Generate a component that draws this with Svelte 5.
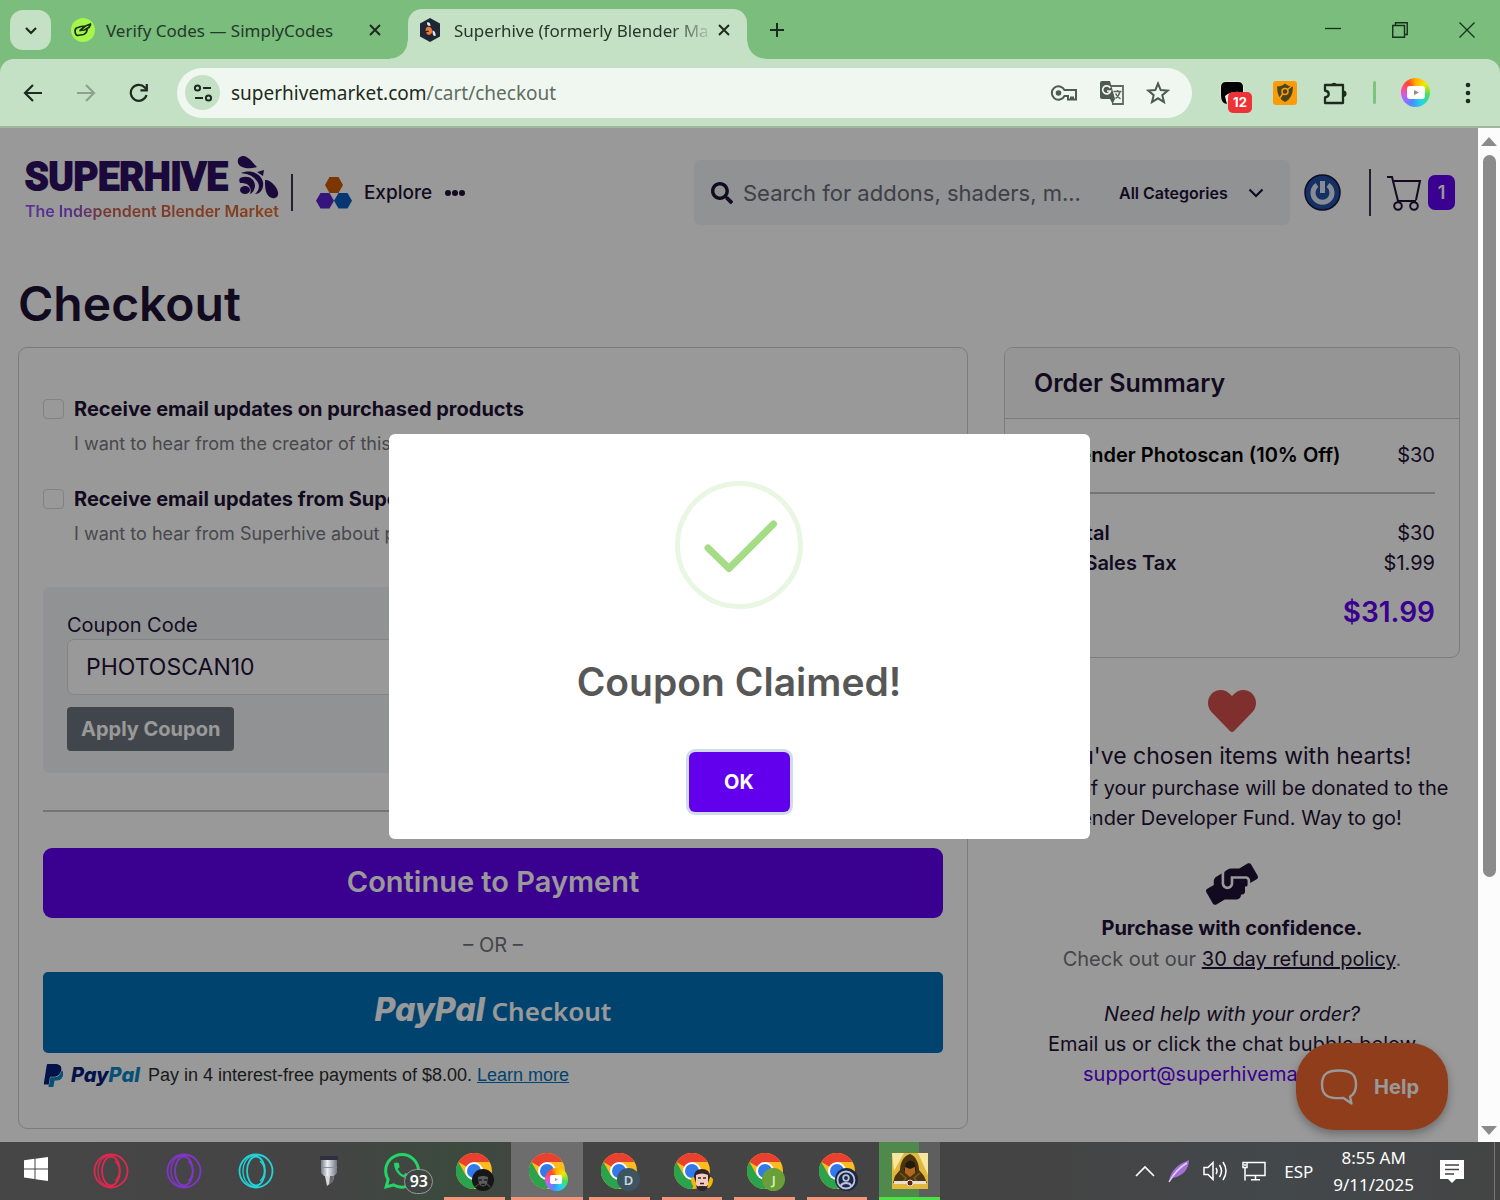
<script lang="ts">
  interface ChromeWindow {
    name: string
    badge: string
    letter?: string
    active?: boolean
  }

  const operaApps = [
    { name: 'Opera', color: '#e0284f' },
    { name: 'Opera GX', color: '#8136c9' },
    { name: 'Opera Air', color: '#22d3d8' }
  ]

  const chromeWindows: ChromeWindow[] = [
    { name: 'Chrome, first profile', badge: 'photo' },
    { name: 'Chrome, Superhive', badge: 'rainbow', active: true },
    { name: 'Chrome, profile D', badge: 'slate', letter: 'D' },
    { name: 'Chrome, fourth profile', badge: 'face' },
    { name: 'Chrome, profile J', badge: 'leaf', letter: 'J' },
    { name: 'Chrome, guest', badge: 'guest' }
  ]

  const subscriptions = [
    {
      id: 'updates-products',
      label: 'Receive email updates on purchased products',
      hint: 'I want to hear from the creator of this'
    },
    {
      id: 'updates-superhive',
      label: 'Receive email updates from Superhive',
      hint: 'I want to hear from Superhive about products'
    }
  ]

  let coupon = 'PHOTOSCAN10'
  let showModal = true
</script>

{#snippet closeIcon()}
  <svg width="14" height="14" viewBox="0 0 14 14"><path d="M2 2l10 10M12 2L2 12" stroke="#1c2b1e" stroke-width="2" /></svg>
{/snippet}

<div class="window">
  <div class="tabstrip">
    <button class="tab-search" aria-label="Search tabs">
      <svg width="14" height="10" viewBox="0 0 14 10"><path d="M2 2l5 5 5-5" fill="none" stroke="#1c2b1e" stroke-width="2.2" /></svg>
    </button>
    <div class="tab">
      <svg width="24" height="24" viewBox="0 0 24 24">
        <circle cx="12" cy="12" r="12" fill="#a6f54a" />
        <path d="M10 8.500L5.500 10c-2.500 1.500-1.500 7 1 7.500l6-1c2.500-1 3.500-3 3.500-5L19.500 7M9 12.500L14.500 8l5-2M10 8.500l4.500-.5M9 12.500l4.500-.5 5-3" fill="none" stroke="#17300f" stroke-width="1.700" stroke-linecap="round" stroke-linejoin="round" />
      </svg>
      <span class="tab-title">Verify Codes — SimplyCodes</span>
      <button class="icon-button" aria-label="Close tab">{@render closeIcon()}</button>
    </div>
    <div class="tab active">
      <svg width="22" height="24" viewBox="0 0 22 24">
        <path d="M11 0l10 5.500v13L11 24 1 18.500v-13z" fill="#1e2733" />
        <path d="M8 4.500c2-1 3.500 1 3.500 3.500-2 .5-4-1-3.500-3.500z" fill="#dfe6f2" />
        <path d="M7 10c2-2 5-1.500 6 1.500s-1 5-3 5.500c-2-.5-3-1.500-2.500-3 1.500 0 2.500 0 2.500-1-1-1-2-.5-3.500 0z" fill="#ee7a35" />
        <path d="M13.500 12.500c2 0 3.500 3 3 5.500-2 .5-3-1-3-5.500z" fill="#dfe6f2" />
      </svg>
      <span class="tab-title fade">Superhive (formerly Blender Ma</span>
      <button class="icon-button" aria-label="Close tab">{@render closeIcon()}</button>
    </div>
    <button class="icon-button new-tab" aria-label="New tab">
      <svg width="16" height="16" viewBox="0 0 16 16"><path d="M8 1v14M1 8h14" stroke="#1c2b1e" stroke-width="2" /></svg>
    </button>
    <div class="window-buttons">
      <button class="icon-button" aria-label="Minimize">
        <svg width="16" height="16" viewBox="0 0 16 16"><path d="M0 6.500h16" stroke="#17301a" stroke-width="1.300" /></svg>
      </button>
      <button class="icon-button" aria-label="Restore">
        <svg width="16" height="16" viewBox="0 0 16 16"><path d="M.75 3.500h11.750v11.750H.75zM3.500 3.500V.75h11.750V12.500H12.500" fill="none" stroke="#17301a" stroke-width="1.400" /></svg>
      </button>
      <button class="icon-button" aria-label="Close">
        <svg width="16" height="16" viewBox="0 0 16 16"><path d="M.5.5l15 15M15.500.5l-15 15" stroke="#17301a" stroke-width="1.300" /></svg>
      </button>
    </div>
  </div>

  <div class="toolbar">
    <div class="nav">
      <button class="icon-button" aria-label="Back">
        <svg width="20" height="20" viewBox="0 0 20 20"><path d="M19 10H2M10 2l-8 8 8 8" fill="none" stroke="#1c2b1e" stroke-width="2.200" /></svg>
      </button>
      <button class="icon-button" aria-label="Forward">
        <svg width="20" height="20" viewBox="0 0 20 20"><path d="M1 10h17M10 2l8 8-8 8" fill="none" stroke="#8aa48b" stroke-width="2.200" /></svg>
      </button>
      <button class="icon-button" aria-label="Reload">
        <svg width="20" height="20" viewBox="0 0 20 20"><path d="M17.500 12A8 8 0 1 1 15.800 4.500L18 7" fill="none" stroke="#1c2b1e" stroke-width="2.200" /><path d="M18.900 1v7.500h-7.500v-2.200h5.300V1z" fill="#1c2b1e" /></svg>
      </button>
    </div>
    <div class="omnibox">
      <button class="site-info" aria-label="View site information">
        <svg width="20" height="18" viewBox="0 0 20 18"><g fill="none" stroke="#1c2b1e" stroke-width="2"><circle cx="4.500" cy="4" r="2.600" /><path d="M10 4h8M2 14h8" /><circle cx="15.500" cy="14" r="2.600" /></g></svg>
      </button>
      <span class="url">superhivemarket.com<span class="path">/cart/checkout</span></span>
      <button class="icon-button" aria-label="Passwords">
        <svg width="28" height="18" viewBox="0 0 28 18"><path d="M14.500 6A6.700 6.700 0 1 0 14.500 12H18v3.500h3V13.500h2V15.500h3V6z" fill="none" stroke="#4f5b52" stroke-width="2" /><circle cx="8.500" cy="9" r="2.800" fill="#4f5b52" /></svg>
      </button>
      <button class="icon-button" aria-label="Translate">
        <svg width="26" height="26" viewBox="0 0 26 26">
          <path d="M9 6h15v18H13" fill="none" stroke="#5d6a60" stroke-width="1.800" />
          <path d="M1 3q0-2 2-2h8l5 18H3q-2 0-2-2z" fill="#4f5b52" />
          <path d="M11 19l2.500 5 2.500-5z" fill="#4f5b52" />
          <path d="M11.200 8A4 4 0 1 0 11.500 11H8" fill="none" stroke="#f0f7f0" stroke-width="1.700" />
          <path d="M14.500 11.500h8M18.500 10v1.500M21 11.500c-1 4-3 6-4.500 7M16.500 13.500c1 2 3 4 5 5.500" fill="none" stroke="#5d6a60" stroke-width="1.500" />
        </svg>
      </button>
      <button class="icon-button" aria-label="Bookmark this tab">
        <svg width="24" height="24" viewBox="0 0 24 24"><path d="M12 2.500l2.700 6.600 7 .5-5.400 4.600 1.700 6.900L12 17.300l-6 3.800 1.700-6.900L2.300 9.600l7-.5z" fill="none" stroke="#4f5b52" stroke-width="2" /></svg>
      </button>
    </div>
    <div class="extensions">
      <button class="icon-button ext-mask" aria-label="Extension, 12 notifications">
        <svg width="24" height="24" viewBox="0 0 24 24"><rect x=".5" y=".5" width="23" height="20" rx="5" fill="#e9f3e9" /><path d="M1 6q0-5 5-5h12q5 0 5 5v7q-3-3-8-2-7 1-10 4 1 5 2 8-6-1-6-8z" fill="#000" /></svg>
        <span class="ext-count">12</span>
      </button>
      <button class="icon-button" aria-label="Shield extension">
        <svg width="24" height="24" viewBox="0 0 24 24"><rect width="24" height="24" rx="3" fill="#fb9c07" /><path d="M4 5.500q5 0 8-3 3 3 8 3 0 12-8 15.500Q4 17.500 4 5.500z" fill="#4b4420" /><circle cx="12" cy="10.500" r="3" fill="none" stroke="#fb9c07" stroke-width="1.500" /><path d="M14.500 8.500L20 4M9.500 13L7 17" stroke="#fb9c07" stroke-width="1.500" /></svg>
      </button>
      <button class="icon-button" aria-label="Extensions">
        <svg width="26" height="26" viewBox="0 0 26 26"><path d="M3 5h18v18H3v-5.500c5-1 5-6 0-7z" fill="none" stroke="#1c2b1e" stroke-width="2.300" stroke-linejoin="round" /><path d="M9 5a3.200 3.500 0 0 1 6 0zM21 10.500a3.500 3.200 0 0 1 0 6.500z" fill="#1c2b1e" /></svg>
      </button>
      <span class="divider"></span>
      <button class="profile" aria-label="Profile">
        <svg width="18" height="13" viewBox="0 0 18 13"><rect width="18" height="13" rx="3" fill="#fff" /><path d="M7 4l5 2.500L7 9z" fill="#9a8c7a" /></svg>
      </button>
      <button class="icon-button" aria-label="Menu">
        <svg width="6" height="22" viewBox="0 0 6 22" fill="#1c2b1e"><circle cx="3" cy="3" r="2.300" /><circle cx="3" cy="11" r="2.300" /><circle cx="3" cy="19" r="2.300" /></svg>
      </button>
    </div>
  </div>

  <div class="viewport">
    <div class="page">
      <header>
        <a class="logo" href="/">
          <span class="logo-row">
            <span class="logo-name">SUPERHIVE</span>
            <svg width="42" height="44" viewBox="0 0 42 44" fill="#2c1061">
              <path d="M1 8C0 3 3 1 7 1c5 1 9 7 13 11-6 2-17 2-19-4z" />
              <path d="M20 17l7-2-1 6z" />
              <path d="M4 18c9-4 20 0 22 9 1 6-2 12-8 12 5-4 5-10 1-14-4-5-9-6-15-7z" />
              <path d="M3 23c8-3 14 0 15 7 0 4-2 8-5 9 1-3 1-6-1-8-2-3-6-3-9-3-1-2-1-4 0-5z" />
              <ellipse cx="8" cy="35" rx="5" ry="4" />
              <path d="M28 25c4-1 12 6 13 12 1 5-3 7-6 6-7-2-7-11-7-18z" />
            </svg>
          </span>
          <span class="tagline">The Independent Blender Market</span>
        </a>
        <span class="bar"></span>
        <button class="explore">
          <svg width="36" height="32" viewBox="0 0 36 32">
            <path d="M13.500 0h9l4.500 8-4.500 8h-9L9 8z" fill="#cf5a05" />
            <path d="M4.500 16h9l4.500 7.800-4.500 7.800h-9L0 23.800z" fill="#5624cd" />
            <path d="M22.500 16h9l4.500 7.800-4.500 7.800h-9L18 23.800z" fill="#0b5cc0" />
          </svg>
          Explore
          <svg width="22" height="8" viewBox="0 0 22 8" fill="#1f1235"><circle cx="4" cy="4" r="3" /><circle cx="11" cy="4" r="3" /><circle cx="18" cy="4" r="3" /></svg>
        </button>
        <form class="search">
          <svg width="22" height="22" viewBox="0 0 512 512" fill="#1f1235"><path d="M505 442.700L405.300 343c-4.500-4.500-10.600-7-17-7H372c27.600-35.300 44-79.700 44-128C416 93.100 322.900 0 208 0S0 93.100 0 208s93.100 208 208 208c48.300 0 92.700-16.400 128-44v16.300c0 6.400 2.500 12.500 7 17l99.700 99.700c9.400 9.400 24.600 9.400 33.900 0l28.300-28.300c9.400-9.400 9.400-24.600.1-34zM208 336c-70.700 0-128-57.200-128-128 0-70.700 57.200-128 128-128 70.700 0 128 57.200 128 128 0 70.700-57.200 128-128 128z" /></svg>
          <input type="text" aria-label="Search" placeholder="Search for addons, shaders, m..." />
          <select aria-label="Category">
            <option>All Categories</option>
          </select>
          <svg class="select-arrow" width="16" height="10" viewBox="0 0 16 10"><path d="M1.500 1.500L8 8l6.500-6.500" fill="none" stroke="#1f1235" stroke-width="2.200" /></svg>
        </form>
        <button class="avatar" aria-label="Account">
          <svg width="37" height="37" viewBox="0 0 37 37"><circle cx="18.500" cy="18.500" r="17.500" fill="#2450a4" stroke="#1a1440" stroke-width="1.500" /><path d="M13 11a9.500 9.500 0 1 0 11 0" fill="none" stroke="#dfe9f8" stroke-width="5" /><path d="M18.500 7v12" stroke="#dfe9f8" stroke-width="5" /></svg>
        </button>
        <span class="bar tall"></span>
        <a class="cart" href="/cart" aria-label="Cart, 1 item">
          <svg width="36" height="36" viewBox="0 0 36 36" fill="none" stroke="#1f1235" stroke-width="2"><path d="M1 2h5l6 24h18M8 6h26l-4 19" /><circle cx="12" cy="31" r="3.800" /><circle cx="28" cy="31" r="3.800" /></svg>
          <span class="cart-count">1</span>
        </a>
      </header>

      <h1>Checkout</h1>

      <div class="columns">
        <section class="card checkout">
          {#each subscriptions as item}
            <div class="option">
              <input type="checkbox" id={item.id} />
              <label for={item.id}>{item.label}</label>
              <p>{item.hint}</p>
            </div>
          {/each}

          <div class="coupon">
            <label for="coupon">Coupon Code</label>
            <input id="coupon" type="text" bind:value={coupon} />
            <button>Apply Coupon</button>
          </div>

          <hr />
          <button class="continue">Continue to Payment</button>
          <div class="or">– OR –</div>
          <button class="paypal"><span class="paypal-word">PayPal</span> Checkout</button>
          <div class="pay-later">
            <svg width="20" height="25" viewBox="1 0 21 24"><path d="M21.222 6.917a3.350 3.350 0 0 0-.607-.541c-.013.076-.026.175-.041.254-.93 4.778-4.005 7.201-9.138 7.201h-2.190a.563.563 0 0 0-.556.479l-1.187 7.527h-.506l-.24 1.516a.56.56 0 0 0 .554.647h3.882c.46 0 .85-.334.922-.788.06-.26.76-4.852.816-5.090a.932.932 0 0 1 .923-.788h.58c3.760 0 6.705-1.528 7.565-5.946.36-1.847.174-3.388-.777-4.471z" fill="#0a86c4" /><path d="M7.076 21.337H2.470a.641.641 0 0 1-.633-.74L4.944.901C5.026.382 5.474 0 5.998 0h7.460c2.570 0 4.578.543 5.690 1.810 1.010 1.150 1.304 2.420 1.012 4.287-.023.143-.047.288-.077.437-.983 5.050-4.349 6.797-8.647 6.797h-2.190c-.524 0-.968.382-1.050.9l-1.120 7.106z" fill="#04207c" /></svg>
            <span class="paypal-word small">Pay<span>Pal</span></span>
            <span>Pay in 4 interest-free payments of $8.00. <a href="/pay-later">Learn more</a></span>
          </div>
        </section>

        <aside>
          <section class="card summary">
            <h2>Order Summary</h2>
            <dl>
              <div class="product"><dt>1 × Blender Photoscan (10% Off)</dt><dd>$30</dd></div>
              <div><dt>Subtotal</dt><dd>$30</dd></div>
              <div><dt>State Sales Tax</dt><dd>$1.99</dd></div>
              <div class="total"><dt>Total</dt><dd>$31.99</dd></div>
            </dl>
          </section>

          <div class="notes">
            <svg width="48" height="42" viewBox="0 32 512 448" fill="#d64f4f"><path d="M462.300 62.600C407.500 15.900 326 24.300 275.700 76.200L256 96.500l-19.700-20.300C186.100 24.300 104.500 15.900 49.700 62.600c-62.800 53.600-66.100 149.800-9.900 207.900l193.500 199.800c12.500 12.900 32.800 12.900 45.300 0l193.500-199.800c56.300-58.100 53-154.300-9.800-207.900z" /></svg>
            <p class="lead">You've chosen items with hearts!</p>
            <p>A part of your purchase will be donated to the Blender Developer Fund. Way to go!</p>
            <svg class="hands" width="52" height="42" viewBox="0 0 640 512" fill="#1f1235"><path d="M488 192H336v56c0 39.700-32.300 72-72 72s-72-32.300-72-72V126.400l-64.900 39C107.800 176.900 96 197.800 96 220.200v47.300l-80 46.200C.7 322.500-4.600 342.100 4.300 357.400l80 138.600c8.800 15.300 28.400 20.500 43.700 11.700L231.400 448H368c35.300 0 64-28.700 64-64h16c17.700 0 32-14.300 32-32v-64h8c13.300 0 24-10.700 24-24v-48c0-13.300-10.700-24-24-24zm147.700-37.400L555.700 16C546.900.7 527.300-4.500 512 4.300L408.600 64H306.400c-12 0-23.700 3.400-33.900 9.700L239 94.600c-9.400 5.800-15 16.100-15 27.100V248c0 22.100 17.900 40 40 40s40-17.900 40-40v-88h184c30.900 0 56 25.100 56 56v28.500l80-46.200c15.300-8.900 20.500-28.400 11.700-43.700z" /></svg>
            <p><strong>Purchase with confidence.</strong></p>
            <p class="muted">Check out our <a href="/refunds">30 day refund policy</a>.</p>
            <p class="help-line"><em>Need help with your order?</em></p>
            <p>Email us or click the chat bubble below</p>
            <p><a class="mail" href="mailto:support@superhivemarket.com">support@superhivemarket.com</a></p>
          </div>
        </aside>
      </div>

      <button class="help">
        <svg width="40" height="40" viewBox="0 0 40 40"><path d="M20 3.500c11 0 17 3 17 14 0 6-2 10-6 12l1.500 7-8-5.500c-15 1-21.500-2-21.500-13.500C3 6.500 9 3.500 20 3.500z" fill="none" stroke="#fff" stroke-width="2.400" stroke-linejoin="round" /></svg>
        Help
      </button>

      {#if showModal}
        <div class="overlay">
          <div class="modal" role="dialog" aria-labelledby="modal-title">
            <svg width="128" height="128" viewBox="0 0 128 128">
              <circle cx="64" cy="64" r="61.500" fill="none" stroke="#e9f6e2" stroke-width="5" />
              <path d="M33 67l21 20.500L98.500 43" fill="none" stroke="#a5dc86" stroke-width="7" stroke-linecap="round" stroke-linejoin="round" />
            </svg>
            <h2 id="modal-title">Coupon Claimed!</h2>
            <button onclick={() => (showModal = false)}>OK</button>
          </div>
        </div>
      {/if}
    </div>
    <div class="scrollbar">
      <svg width="16" height="9" viewBox="0 0 16 9"><path d="M0 9l8-9 8 9z" fill="#8b8b8b" /></svg>
      <div class="track"><div class="thumb"></div></div>
      <svg width="16" height="9" viewBox="0 0 16 9"><path d="M0 0l8 9 8-9z" fill="#8b8b8b" /></svg>
    </div>
  </div>

  <footer class="taskbar">
    <button class="start" aria-label="Start">
      <svg width="26" height="26" viewBox="0 0 26 26" fill="#fff"><path d="M1 4.300l10.500-1.500v9.600H1zM12.500 2.700L25 1v11.400H12.500zM1 13.500h10.500v9.600L1 21.600zM12.500 13.500H25V25l-12.500-1.800z" /></svg>
    </button>
    <div class="apps">
      {#each operaApps as app}
        <button aria-label={app.name}>
          <svg width="36" height="36" viewBox="0 0 36 36" fill="none" stroke={app.color} stroke-width="1.800"><circle cx="18" cy="18" r="16.500" /><ellipse cx="18" cy="18" rx="9" ry="14.500" /><path d="M22 8c6 5 6 15 0 20" stroke-width="1.500" /><path d="M20 2.500C0 0 0 36 20 33.500" stroke-width="1.300" /></svg>
        </button>
      {/each}
      <button aria-label="Pen tool">
        <svg width="24" height="36" viewBox="0 0 24 36">
          <defs><linearGradient id="metal"><stop offset="0" stop-color="#737986" /><stop offset=".4" stop-color="#eef0f5" /><stop offset="1" stop-color="#707684" /></linearGradient></defs>
          <path d="M3 3h18v4H3z" fill="#2e3040" /><path d="M4 7h16v13l-3 3H7l-3-3z" fill="url(#metal)" /><path d="M4 14h16v1H4z" fill="#8b909c" /><path d="M8 23h9l-1 5-6 5z" fill="#d9d9d9" /><path d="M13 23h4l-1 5-4 4z" fill="#6a6a6a" />
        </svg>
      </button>
      <button class="whatsapp" aria-label="WhatsApp, 93 unread">
        <svg width="36" height="36" viewBox="0 32 448 448" fill="#25d366"><path d="M380.900 97.100C339 55.100 283.200 32 223.900 32c-122.400 0-222 99.600-222 222 0 39.100 10.200 77.300 29.600 111L0 480l117.700-30.900c32.400 17.700 68.900 27 106.100 27h.1c122.300 0 224.100-99.600 224.100-222 0-59.300-25.200-115-67.100-157zm-157 341.600c-33.200 0-65.700-8.900-94-25.700l-6.700-4-69.800 18.300L72 359.200l-4.400-7c-18.500-29.400-28.200-63.300-28.200-98.200 0-101.700 82.800-184.500 184.600-184.500 49.300 0 95.600 19.200 130.400 54.100 34.800 34.900 56.200 81.200 56.100 130.500 0 101.800-84.900 184.600-186.600 184.600z" /><path transform="translate(92 120) scale(11)" d="M20 15.400c-1.200 0-2.400-.2-3.500-.6-.4-.1-.7 0-1 .2l-1.600 2c-2.800-1.300-5.500-3.900-6.900-6.800l2-1.700c.2-.3.3-.7.2-1-.4-1.100-.6-2.300-.6-3.500 0-.5-.4-1-1-1H4.200C3.600 3 3 3.200 3 4c0 9.300 7.700 17 17 17 .7 0 1-.6 1-1.200v-3.400c0-.6-.4-1-1-1z" /></svg>
        <span class="unread">93</span>
      </button>
      {#each chromeWindows as win}
        <button class="running" class:current={win.active} aria-label={win.name}>
          <svg width="36" height="36" viewBox="0 0 36 36">
            <circle cx="18" cy="18" r="18" fill="#fbbc1f" />
            <path d="M18 18L2.400 9A18 18 0 0 1 33.600 9H18z" fill="#e8412f" />
            <path d="M2.400 9A18 18 0 0 0 18 36l8-13.500L18 27l-8-4.500z" fill="#2ba24c" />
            <circle cx="18" cy="18" r="9" fill="#fff" />
            <circle cx="18" cy="18" r="7" fill="#3279ea" />
          </svg>
          <span class="badge {win.badge}">
            {#if win.letter}
              {win.letter}
            {:else if win.badge === 'rainbow'}
              <svg width="12" height="9" viewBox="0 0 12 9"><rect width="12" height="9" rx="2" fill="#fff" /><path d="M5 3l3 1.500L5 6z" fill="#999" /></svg>
            {:else if win.badge === 'guest'}
              <svg width="20" height="20" viewBox="0 0 20 20" fill="none" stroke="#b9c3e0" stroke-width="1.800"><circle cx="10" cy="10" r="8.500" /><circle cx="10" cy="8" r="2.800" /><path d="M4.500 16c2-4 9-4 11 0" /></svg>
            {:else if win.badge === 'face'}
              <svg width="24" height="24" viewBox="0 0 24 24"><path d="M1 11q0 6 4 9h14q4-3 4-9l-2-2H3z" fill="#f2b705" /><path d="M4 9q0-8 8-8t8 8l-2 6H6z" fill="#30242a" /><path d="M6 7q6-3 12 0v9q-1 6-6 6t-6-6z" fill="#f0cdc0" /><path d="M6 17q2 2 3.500 1h5q1.500 1 3.500-1-1 6-6 6t-6-6z" fill="#30242a" /><path d="M8 10h3M13 10h3M10 15.500h4" stroke="#3a2228" stroke-width="1.300" /></svg>
            {:else}
              <svg width="22" height="22" viewBox="0 0 22 22"><circle cx="11" cy="11" r="11" fill="#161616" /><path d="M6 8q5-2 10 0l-1 7q-4 5-8 0z" fill="#5c5c5c" /><path d="M7 11h3M12 11h3M9 15.500h4" stroke="#1c1c1c" stroke-width="1.500" /><path d="M3 18l4-3M18 18l-3-3" stroke="#444" stroke-width="1.500" /></svg>
            {/if}
          </span>
        </button>
      {/each}
      <button class="game" aria-label="Game download">
        <svg width="36" height="36" viewBox="0 0 36 36">
          <rect width="36" height="36" fill="#e2b73d" />
          <path d="M0 0h12L2 18zM26 0h10v22z" fill="#f6e6a0" />
          <path d="M18 1C11 3 8 11 8 17l-5 6-2 7h34l-3-7-5-6C27 11 24 3 18 1z" fill="#4b3511" />
          <path d="M14 10q4-5 9 0l1 7-6 6-6-6z" fill="#241a0b" />
          <path d="M13 14l5 2 5-2v6l-5 4-5-4z" fill="#b4671c" />
          <path d="M8 20l6 5-3 4M28 20l-6 5 3 4" stroke="#7a5a20" stroke-width="1.500" fill="none" />
          <path d="M2 28h14v3H2zM20 28h14v3H20z" fill="#e8dfcf" /><circle cx="18" cy="30" r="3" fill="#5d1f16" stroke="#e8dfcf" />
        </svg>
      </button>
    </div>
    <div class="tray">
      <svg width="20" height="12" viewBox="0 0 20 12"><path d="M1 11l9-9 9 9" fill="none" stroke="#fff" stroke-width="1.600" /></svg>
      <svg width="22" height="24" viewBox="0 0 22 24"><path d="M1 23C2 12 10 5 21 1c0 9-6 16-16 18z" fill="#a46fd6" /><path d="M1 23C6 14 12 8 19 4" stroke="#e3cdf7" stroke-width="1.500" fill="none" /></svg>
      <svg width="26" height="22" viewBox="0 0 26 22" fill="none" stroke="#fff" stroke-width="1.500"><path d="M1 7.500h4l5-5v17l-5-5H1zM13 8q2 3 0 6M16.500 5q4 6 0 12M20 2q6 9 0 18" /></svg>
      <svg width="24" height="20" viewBox="0 0 24 20" fill="none" stroke="#fff" stroke-width="1.500"><path d="M5 1.500h18v13H4M13.500 14.500v4M9 18.800h9M1 1.500h4v5H1zM3 6.500v13M3 3v2" /></svg>
      <span class="lang">ESP</span>
      <div class="clock"><span>8:55 AM</span><span>9/11/2025</span></div>
      <svg width="24" height="24" viewBox="0 0 24 24"><path d="M0 1h24v19h-8l-4 4-4-4H0z" fill="#fff" /><path d="M5 6h14M5 10.500h14M5 15h9" stroke="#444" stroke-width="1.500" /></svg>
    </div>
  </footer>
</div>

<style>
  :global(body) {
    margin: 0;
  }

  * {
    box-sizing: border-box;
  }

  .window {
    display: flex;
    flex-direction: column;
    height: 100vh;
    font-family: Inter, sans-serif;
    color: #1f1235;
    background: #7bbd7d;
  }

  button,
  input,
  select {
    font: inherit;
    color: inherit;
  }

  button {
    border: 0;
    padding: 0;
    background: none;
    cursor: pointer;
  }

  svg {
    flex: none;
  }

  .icon-button {
    display: grid;
    place-items: center;
    flex: none;
  }

  /* browser frame */
  .tabstrip {
    display: flex;
    align-items: center;
    height: 59px;
    padding-left: 10px;
    font-family: "Noto Sans", sans-serif;
    font-size: 17px;
    color: #25382a;
  }

  .tab-search {
    width: 41px;
    height: 40px;
    border-radius: 13px;
    background: #c5e1c5;
  }

  .tab {
    position: relative;
    display: flex;
    align-items: center;
    width: 339px;
    height: 50px;
    margin-top: 9px;
    padding: 0 8px 8px 20px;
    gap: 11px;
  }

  .tab.active {
    padding-left: 11px;
    padding-right: 16px;
    gap: 13px;
    margin-left: 18px;
    border-radius: 14px 14px 0 0;
    background: #c5e1c5;
  }

  .tab.active::before,
  .tab.active::after {
    content: "";
    position: absolute;
    bottom: 0;
    width: 18px;
    height: 18px;
  }

  .tab.active::before {
    left: -18px;
    background: radial-gradient(circle at 0 0, transparent 17px, #c5e1c5 18px);
  }

  .tab.active::after {
    right: -18px;
    background: radial-gradient(circle at 100% 0, transparent 17px, #c5e1c5 18px);
  }

  .tab-title {
    flex: 1;
    white-space: nowrap;
  }

  .tab-title.fade {
    margin-right: -10px;
    mask-image: linear-gradient(to right, #000 84%, transparent);
  }

  .new-tab {
    margin-left: 22px;
  }

  .window-buttons {
    display: flex;
    gap: 51px;
    margin-left: auto;
    margin-right: 25px;
  }

  .toolbar {
    display: flex;
    align-items: center;
    gap: 28px;
    height: 69px;
    padding: 0 29px 0 23px;
    border-radius: 14px 14px 0 0;
    border-bottom: 2px solid #a0b8a0;
    background: #c5e1c5;
  }

  .nav {
    display: flex;
    gap: 33px;
  }

  .omnibox {
    display: flex;
    flex: 1;
    align-items: center;
    gap: 21px;
    height: 50px;
    padding: 0 22px 0 8px;
    border-radius: 25px;
    background: #f0f7f0;
  }

  .site-info {
    display: grid;
    place-items: center;
    width: 35px;
    height: 35px;
    border-radius: 50%;
    background: #c5e1c5;
  }

  .url {
    flex: 1;
    margin-left: -10px;
    font-family: "Noto Sans", sans-serif;
    font-size: 19px;
    color: #1d2b20;
  }

  .path {
    color: #5f6d62;
  }

  .extensions {
    display: flex;
    align-items: center;
    gap: 25px;
  }

  .ext-mask {
    position: relative;
    margin-right: 4px;
  }

  .ext-count {
    position: absolute;
    left: 8px;
    top: 11px;
    width: 24px;
    height: 21px;
    border-radius: 5px;
    background: #ee3338;
    color: #fff;
    font-size: 13px;
    font-weight: 700;
    line-height: 21px;
    text-align: center;
  }

  .divider {
    width: 3px;
    height: 23px;
    border-radius: 2px;
    background: #7bc47e;
  }

  .profile {
    display: grid;
    place-items: center;
    width: 29px;
    height: 29px;
    margin-right: 10px;
    border-radius: 50%;
    background: conic-gradient(#ffb000, #f4e800 50deg, #45e060 100deg, #22d4e8 150deg, #4a8cff 200deg, #c45cff 250deg, #ff4a90 285deg, #ff4a20 325deg, #ffb000);
  }

  /* page */
  .viewport {
    display: flex;
    flex: 1;
    min-height: 0;
  }

  .page {
    position: relative;
    flex: 1;
    overflow: hidden;
    padding: 32px 18px 12px;
    background: #fff;
    font-size: 20px;
    line-height: 30px;
  }

  header {
    display: flex;
    align-items: center;
    height: 65px;
    padding: 0 5px 0 7px;
  }

  .logo {
    display: flex;
    flex-direction: column;
    gap: 2px;
    margin-top: -10px;
    text-decoration: none;
  }

  .logo-row {
    display: flex;
    align-items: center;
    justify-content: space-between;
    height: 44px;
  }

  .logo-name {
    font-family: Roboto, sans-serif;
    font-size: 38px;
    font-weight: 700;
    color: #2c1061;
    -webkit-text-stroke: 2px #2c1061;
  }

  .tagline {
    font-size: 16px;
    font-weight: 600;
    line-height: 20px;
    color: transparent;
    background: linear-gradient(to right, #9a55f5, #8a50e8 18%, #c85f50 32%, #e06a2c);
    background-clip: text;
  }

  .bar {
    width: 2px;
    height: 37px;
    margin: 0 23px 0 12px;
    background: #3d3550;
  }

  .bar.tall {
    height: 47px;
    margin: 0 15px 0 28px;
  }

  .explore {
    display: flex;
    align-items: center;
    gap: 12px;
    font-size: 19px;
    font-weight: 500;
  }

  .search {
    display: flex;
    align-items: center;
    width: 596px;
    height: 65px;
    margin-left: auto;
    margin-right: 14px;
    padding: 0 26px 0 17px;
    border-radius: 6px;
    background: #f1f3f7;
  }

  .search input {
    flex: 1;
    min-width: 0;
    padding: 0 10px;
    border: 0;
    background: none;
    font-size: 22px;
  }

  .search input::placeholder {
    color: #6a6a76;
  }

  .search select {
    appearance: none;
    border: 0;
    background: none;
    font-size: 16px;
    font-weight: 600;
  }

  .select-arrow {
    margin-left: 20px;
  }

  .avatar {
    display: grid;
  }

  .cart {
    display: flex;
    align-items: center;
    gap: 6px;
    text-decoration: none;
  }

  .cart-count {
    width: 27px;
    border-radius: 7px;
    background: #6200ee;
    color: #fff;
    font-size: 18px;
    font-weight: 600;
    line-height: 35px;
    text-align: center;
  }

  h1 {
    margin: 51px 0 15px;
    font-size: 48px;
    font-weight: 600;
    line-height: 56px;
  }

  .columns {
    display: grid;
    grid-template-columns: 25fr 12fr;
    gap: 36px;
    align-items: start;
  }

  .card {
    border: 1px solid #cfcfd2;
    border-radius: 9px;
  }

  .checkout {
    padding: 46px 24px 39px;
  }

  .option {
    display: grid;
    grid-template-columns: 21px 1fr;
    column-gap: 10px;
    row-gap: 7px;
    align-items: center;
    margin-bottom: 27px;
  }

  .option input {
    appearance: none;
    width: 21px;
    height: 20px;
    margin: 0;
    border: 1px solid #d9d9dc;
    border-radius: 4px;
  }

  .option label {
    font-weight: 700;
  }

  .option p {
    grid-column: 2;
    margin: 0;
    font-size: 18px;
    line-height: 26px;
    color: #77797f;
  }

  .coupon {
    display: flex;
    flex-direction: column;
    align-items: flex-start;
    margin-top: 40px;
    padding: 24px 24px 22px;
    border-radius: 6px;
    background: #f1f3f7;
  }

  .coupon label {
    line-height: 28px;
  }

  .coupon input {
    width: 100%;
    height: 56px;
    padding: 0 18px;
    border: 1px solid #dcdce2;
    border-radius: 7px;
    background: #fff;
    font-size: 23px;
  }

  .coupon button {
    height: 44px;
    margin-top: 12px;
    padding: 0 14px;
    border-radius: 4px;
    background: #6c757d;
    color: #fff;
    font-weight: 700;
  }

  hr {
    height: 2px;
    margin: 37px 0 36px;
    border: 0;
    background: #c4c4c8;
  }

  .continue {
    width: 100%;
    height: 70px;
    padding-bottom: 2px;
    border-radius: 9px;
    background: #6200ee;
    color: #fff;
    font-size: 29px;
    font-weight: 600;
  }

  .or {
    color: #70757c;
    line-height: 54px;
    text-align: center;
  }

  .paypal {
    width: 100%;
    height: 81px;
    padding-bottom: 4px;
    border-radius: 5px;
    background: #0070ba;
    color: #fff;
    font-family: "Noto Sans", sans-serif;
    font-size: 26px;
    font-weight: 600;
  }

  .paypal-word {
    font-family: Inter, sans-serif;
    font-size: 32px;
    font-style: italic;
    font-weight: 800;
  }

  .paypal-word.small {
    margin-right: 8px;
    margin-left: 8px;
    font-size: 20px;
    color: #04207c;
  }

  .paypal-word.small span {
    color: #0a86c4;
  }

  .pay-later {
    display: flex;
    align-items: center;
    height: 28px;
    margin-top: 8px;
    font-family: "Liberation Sans", Arial, sans-serif;
    font-size: 18px;
    color: #2c2e2f;
  }

  .pay-later a {
    color: #0070ba;
  }

  .summary h2 {
    margin: 0;
    padding: 0 29px;
    border-bottom: 1px solid #cfcfd2;
    border-radius: 8px 8px 0 0;
    background: #f8f8f8;
    font-size: 25px;
    font-weight: 600;
    line-height: 70px;
  }

  dl {
    margin: 0;
    padding: 21px 24px 27px;
  }

  dl div {
    display: flex;
    justify-content: space-between;
  }

  dt {
    font-weight: 600;
  }

  dd {
    margin: 0;
  }

  .product {
    margin-bottom: 24px;
    padding-bottom: 22px;
    border-bottom: 2px solid #c4c4c8;
  }

  .product dt {
    color: #000;
  }

  .total {
    margin-top: 16px;
    line-height: 36px;
  }

  .total dd {
    font-size: 28px;
    font-weight: 600;
    color: #6200ee;
  }

  .notes {
    display: flex;
    flex-direction: column;
    align-items: center;
    margin-top: 32px;
    text-align: center;
  }

  .notes p {
    margin: 0;
  }

  .notes .lead {
    margin-top: 7px;
    font-size: 23px;
    line-height: 34px;
  }

  .hands {
    margin: 30px 0 8px;
  }

  .notes .muted {
    color: #70757c;
    line-height: 32px;
  }

  .muted a {
    color: #1f1235;
  }

  .notes .help-line {
    margin-top: 24px;
  }

  .mail {
    color: #6200ee;
    text-decoration: none;
  }

  .help {
    position: absolute;
    right: 30px;
    bottom: 12px;
    display: flex;
    align-items: center;
    gap: 15px;
    height: 87px;
    padding: 0 29px 0 23px;
    border-radius: 38px;
    background: #ee662d;
    box-shadow: 0 4px 10px rgba(0, 0, 0, 0.3);
    color: #fff;
    font-size: 20px;
    font-weight: 700;
  }

  .overlay {
    position: absolute;
    inset: 0;
    display: grid;
    place-items: center;
    background: rgba(0, 0, 0, 0.4);
  }

  .modal {
    display: flex;
    flex-direction: column;
    align-items: center;
    width: 701px;
    margin-top: 2px;
    padding: 47px 0 27px;
    border-radius: 6px;
    background: #fff;
  }

  .modal h2 {
    margin: 46px 0 43px;
    font-size: 39px;
    font-weight: 600;
    line-height: 54px;
    color: #575757;
  }

  .modal button {
    width: 101px;
    height: 60px;
    border-radius: 6px;
    background: #6200ee;
    box-shadow: 0 0 0 3px #cfdcec;
    color: #fff;
    font-weight: 700;
  }

  .scrollbar {
    display: flex;
    flex-direction: column;
    align-items: center;
    width: 22px;
    padding: 9px 0 7px;
    background: #fcfcfc;
  }

  .track {
    flex: 1;
    padding: 9px 0;
  }

  .thumb {
    width: 13px;
    height: 75%;
    border-radius: 7px;
    background: #8b8b8b;
  }

  /* taskbar */
  .taskbar {
    display: flex;
    height: 58px;
    background: linear-gradient(to right, #464646, #444 22%, #3c4a3e 30%, #444 38%, #444 70%, #43484b 85%, #444);
    color: #fff;
    font-family: "Noto Sans", sans-serif;
  }

  .start {
    width: 75px;
    padding-right: 4px;
  }

  .apps {
    display: grid;
    grid-template-columns: repeat(12, 1fr);
    width: 871px;
  }

  .apps button {
    position: relative;
    display: grid;
    place-items: center;
  }

  .apps .running::after,
  .apps .game::after {
    content: "";
    position: absolute;
    inset: auto 6px 0;
    height: 3px;
    background: #f5957a;
  }

  .apps .current {
    background: #6d6d6d;
  }

  .apps .current::after {
    inset: auto 0 0;
  }

  .badge {
    position: absolute;
    left: 34px;
    top: 26px;
    display: grid;
    place-items: center;
    width: 23px;
    height: 23px;
    border-radius: 50%;
    font-size: 13px;
    font-weight: 600;
    color: #c9d6df;
  }

  .badge.rainbow {
    background: conic-gradient(#ffb000, #f4e800 50deg, #45e060 100deg, #22d4e8 150deg, #4a8cff 200deg, #c45cff 250deg, #ff4a90 285deg, #ff4a20 325deg, #ffb000);
  }

  .badge.slate {
    background: #3d5461;
  }

  .badge.leaf {
    background: #689f38;
    color: #dcebc4;
  }

  .badge.guest {
    background: #1c2740;
  }

  .unread {
    position: absolute;
    left: 39px;
    top: 27px;
    width: 29px;
    height: 25px;
    border: 1px solid #9a9a9a;
    border-radius: 13px;
    background: #3f4540;
    font-size: 16px;
    font-weight: 600;
    line-height: 23px;
    text-align: center;
  }

  .apps .game {
    margin: 0 6px;
    background: linear-gradient(to right, #4f8a4c 66%, #5e5e5e 66%);
  }

  .apps .game::after {
    inset: auto 0 0;
    background: #4be044;
  }

  .tray {
    display: flex;
    align-items: center;
    gap: 13px;
    margin-left: auto;
    margin-right: 5px;
    padding-right: 30px;
    border-right: 1px solid #777;
    font-size: 17px;
  }

  .lang {
    margin: 0 7px 0 5px;
  }

  .clock {
    display: flex;
    flex-direction: column;
    align-items: center;
    margin-right: 13px;
    line-height: 27px;
  }
</style>
